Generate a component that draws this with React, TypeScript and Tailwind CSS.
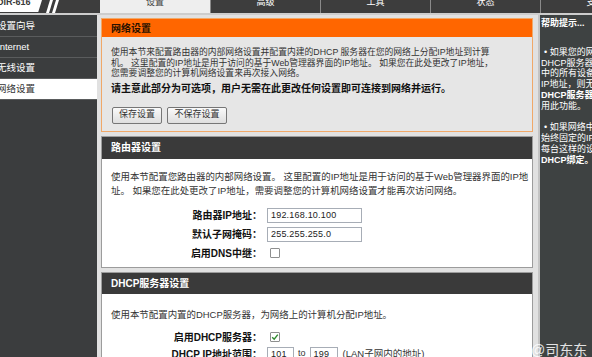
import React from 'react'

const tabs = ['设置', '高级', '工具', '状态', '支持']
const menu = ['设置向导', 'Internet', '无线设置', '网络设置']

function Checkbox({ checked }: { checked?: boolean }) {
  return (
    <div className="w-[10px] h-[10px] border border-[#8e8f8f] bg-white rounded-[1px] flex items-center justify-center">
      {checked && (
        <svg width="8" height="8" viewBox="0 0 8 8">
          <path d="M1.2 4.2 L3.2 6.2 L6.8 1.6" fill="none" stroke="#2f8a2f" strokeWidth="1.4" />
        </svg>
      )}
    </div>
  )
}

function Field({ label, children, h }: { label: string; children: React.ReactNode; h: string }) {
  return (
    <div className={`flex items-center ${h}`}>
      <div className="w-[161px] shrink-0 text-right font-bold text-[10px] text-[#111] pr-[1px]">{label}</div>
      <div className="ml-[4px] flex items-center">{children}</div>
    </div>
  )
}

function TextInput({ value, w }: { value: string; w: string }) {
  return (
    <div className={`${w} h-[15px] border border-[#a7adb6] bg-white text-[9px] leading-[13px] text-[#222] px-[3px] tracking-[0.2px]`}>
      {value}
    </div>
  )
}

export default function App() {
  return (
    <div className="relative w-[592px] h-[357px] overflow-hidden bg-[#e1e1e1] font-['Liberation_Sans','Noto_Sans_CJK_SC',sans-serif] text-[#333]">
      {/* top bar */}
      <div className="flex h-[13px] bg-[#3d3d3d] overflow-hidden">
        <div className="flex w-[100px] shrink-0">
          <div className="w-[42px] h-[12px] bg-white [clip-path:polygon(0_0,100%_0,91%_100%,0_100%)]">
            <div className="-ml-[3px] -mt-[2px] text-[9px] leading-[8px] font-bold text-[#3a3a3a]">DIR-616</div>
          </div>
          <svg width="18" height="13" viewBox="0 0 18 13" className="ml-[2px]">
            <polygon points="6,0 9,0 5,13 2,13" fill="#ffffff" />
            <polygon points="12,0 15,0 11,13 8,13" fill="#ffffff" />
          </svg>
        </div>
        {tabs.map((t, i) => (
          <div
            key={t}
            className={`w-[110px] shrink-0 text-center text-[9px] leading-[8px] ${
              i === 0 ? 'bg-[#eeeeee] text-[#444]' : 'text-white border-l border-[#8a8a8a]'
            }`}
          >
            <div className="-mt-[2px]">{t}</div>
          </div>
        ))}
      </div>
      <div className="h-[2px] bg-[#cdcdcd]" />

      <div className="flex h-[342px]">
        {/* sidebar */}
        <div className="w-[97px] shrink-0 bg-[#3b3d3e] pt-[1px]">
          {menu.map((m, i) => (
            <div
              key={m}
              className={`h-[21px] flex items-center border-b border-[#5a5c5d] text-[9.5px] ${
                i === 3 ? 'bg-white text-[#333]' : 'text-white'
              }`}
            >
              <span className="-ml-[3px]">{m}</span>
            </div>
          ))}
        </div>

        {/* main column */}
        <div className="w-[432px] shrink-0 ml-[4px] pt-[3px]">
          <div className="border border-[#f0a868]">
            <div className="h-[18px] bg-[#ff6600] px-[9px] flex items-center font-bold text-[10px] text-[#2a1200]">网络设置</div>
            <div className="bg-[#e6e6e6] px-[9px] pt-[10px] pb-[7px]">
              <div className="text-[8.8px] leading-[10.5px] text-[#333] whitespace-nowrap">
                <div>使用本节来配置路由器的内部网络设置并配置内建的DHCP 服务器在您的网络上分配IP地址到计算</div>
                <div>机。 这里配置的IP地址是用于访问的基于Web管理器界面的IP地址。 如果您在此处更改了IP地址，</div>
                <div>您需要调整您的计算机网络设置来再次接入网络。</div>
              </div>
              <div className="mt-[4px] text-[10px] leading-[12px] font-bold text-[#111] whitespace-nowrap">
                请主意此部分为可选项，用户无需在此更改任何设置即可连接到网络并运行。
              </div>
              <div className="mt-[12px] flex gap-[5px] pl-[1px]">
                <button className="w-[50px] h-[17px] border border-[#767676] rounded-[2px] bg-gradient-to-b from-[#fafafa] to-[#dedede] text-[9px] text-[#333]">保存设置</button>
                <button className="w-[60px] h-[17px] border border-[#767676] rounded-[2px] bg-gradient-to-b from-[#fafafa] to-[#dedede] text-[9px] text-[#333]">不保存设置</button>
              </div>
            </div>
          </div>

          <div className="mt-[4px] border border-[#9c9c9c] bg-white">
            <div className="h-[22px] bg-[#3a3a3a] px-[9px] flex items-center font-bold text-[10px] text-white">路由器设置</div>
            <div className="px-[9px] pt-[11px] text-[9.45px] leading-[14px] text-[#333] whitespace-nowrap">
              <div>使用本节配置您路由器的内部网络设置。 这里配置的IP地址是用于访问的基于Web管理器界面的IP地</div>
              <div>址。 如果您在此处更改了IP地址，需要调整您的计算机网络设置才能再次访问网络。</div>
            </div>
            <div className="mt-[8px] pb-[4px]">
              <Field label="路由器IP地址：" h="h-[19px]">
                <TextInput value="192.168.10.100" w="w-[95px]" />
              </Field>
              <Field label="默认子网掩码：" h="h-[19px]">
                <TextInput value="255.255.255.0" w="w-[95px]" />
              </Field>
              <Field label="启用DNS中继：" h="h-[19px]">
                <div className="ml-[3px]">
                  <Checkbox />
                </div>
              </Field>
            </div>
          </div>

          <div className="mt-[4px] border border-[#9c9c9c] bg-white h-[120px]">
            <div className="h-[21px] bg-[#3a3a3a] px-[9px] flex items-center font-bold text-[10px] text-white">DHCP服务器设置</div>
            <div className="px-[9px] pt-[14px] text-[9.45px] leading-[14px] text-[#333] whitespace-nowrap">
              使用本节配置内置的DHCP服务器，为网络上的计算机分配IP地址。
            </div>
            <div className="mt-[7px]">
              <Field label="启用DHCP服务器：" h="h-[17px]">
                <div className="ml-[3px]">
                  <Checkbox checked />
                </div>
              </Field>
              <Field label="DHCP IP地址范围：" h="h-[17px]">
                <TextInput value="101" w="w-[27px]" />
                <span className="mx-[4px] text-[9px] text-[#333]">to</span>
                <TextInput value="199" w="w-[28px]" />
                <span className="ml-[5px] text-[9.5px] text-[#333] whitespace-nowrap">(LAN子网内的地址)</span>
              </Field>
            </div>
          </div>
        </div>

        {/* help */}
        <div className="ml-[5px] flex-1 bg-[#3e4242] border-l-2 border-[#c4c4c4] pl-[1px] pt-[3px] text-[9px] leading-[10.8px] text-white whitespace-nowrap overflow-hidden">
          <div className="font-bold">帮助提示...</div>
          <div className="mt-[18px]">
            <div className="pl-[3px]">• 如果您的网</div>
            <div>DHCP服务器，</div>
            <div>中的所有设备</div>
            <div>IP地址，则无</div>
            <div className="font-bold">DHCP服务器</div>
            <div>用此功能。</div>
          </div>
          <div className="mt-[10.8px]">
            <div className="pl-[3px]">• 如果网络中</div>
            <div>始终固定的IP</div>
            <div>每台这样的设</div>
            <div className="font-bold">DHCP绑定。</div>
          </div>
        </div>
      </div>

      <span className="absolute left-[531px] top-[342px] text-[14px] leading-[16px] text-white/85">@司东东</span>
    </div>
  )
}
